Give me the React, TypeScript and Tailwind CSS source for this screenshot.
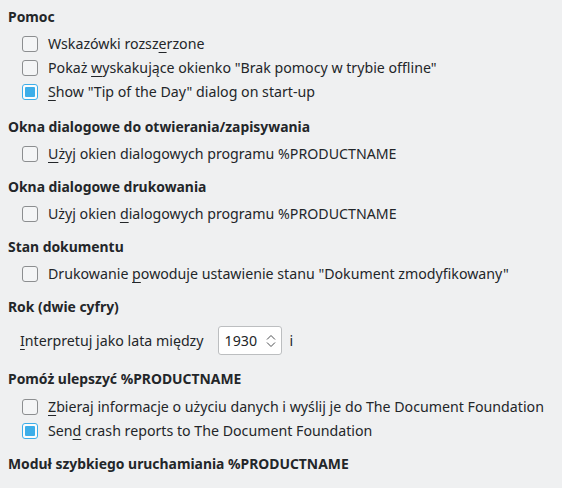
import React from "react";

const U = ({ children }: { children: React.ReactNode }) => (
  <span className="underline decoration-1 underline-offset-[3px]">{children}</span>
);

function Checkbox({ checked }: { checked?: boolean }) {
  if (checked) {
    return (
      <span className="flex h-4 w-4 shrink-0 items-center justify-center rounded-[3px] border border-[#3daee9] bg-[#fcfcfc]">
        <span className="h-[10px] w-[10px] rounded-[1px] bg-[#3daee9]" />
      </span>
    );
  }
  return <span className="h-4 w-4 shrink-0 rounded-[3px] border border-[#8c8e90] bg-[#f4f5f6]" />;
}

function Row({ checked, children }: { checked?: boolean; children: React.ReactNode }) {
  return (
    <div className="flex h-6 items-center gap-[10px] pl-[22px] whitespace-nowrap">
      <Checkbox checked={checked} />
      <span>{children}</span>
    </div>
  );
}

function Heading({ children, className = "" }: { children: React.ReactNode; className?: string }) {
  return (
    <div className={`h-5 leading-5 pl-2 text-[13.9px] font-bold whitespace-nowrap ${className}`}>{children}</div>
  );
}

export default function App() {
  return (
    <div
      className="h-[488px] w-[562px] overflow-hidden bg-[#eff0f1] pt-[7px] text-[14.2px] leading-5 text-[#232629]"
      style={{ fontFamily: '"Noto Sans", "DejaVu Sans", sans-serif' }}
    >
      <Heading>Pomoc</Heading>
      <div className="mt-[5px]">
        <Row>
          Wskazówki rozsz<U>e</U>rzone
        </Row>
        <Row>
          Pokaż <U>w</U>yskakujące okienko "Brak pomocy w trybie offline"
        </Row>
        <Row checked>
          <U>S</U>how "Tip of the Day" dialog on start-up
        </Row>
      </div>

      <Heading className="mt-[13px]">Okna dialogowe do otwierania/zapisywania</Heading>
      <div className="mt-[5px]">
        <Row>
          <U>U</U>żyj okien dialogowych programu %PRODUCTNAME
        </Row>
      </div>

      <Heading className="mt-[11px]">Okna dialogowe drukowania</Heading>
      <div className="mt-[5px]">
        <Row>
          Użyj okien <U>d</U>ialogowych programu %PRODUCTNAME
        </Row>
      </div>

      <Heading className="mt-[11px]">Stan dokumentu</Heading>
      <div className="mt-[5px]">
        <Row>
          Drukowanie <U>p</U>owoduje ustawienie stanu "Dokument zmodyfikowany"
        </Row>
      </div>

      <Heading className="mt-[11px]">Rok (dwie cyfry)</Heading>
      <div className="mt-[9px] flex h-[29px] items-center pl-5 whitespace-nowrap">
        <span>
          <U>I</U>nterpretuj jako lata między
        </span>
        <div className="ml-[14px] flex h-[29px] w-[64px] items-center rounded-[3px] border border-[#bcbec0] bg-white pl-[6px]">
          <span>1930</span>
          <svg className="ml-auto mr-[4px]" width="12" height="16" viewBox="0 0 12 16" fill="none">
            <path d="M2 6.5 L6 2.5 L10 6.5" stroke="#4d4f52" strokeWidth="1" />
            <path d="M2 9.5 L6 13.5 L10 9.5" stroke="#4d4f52" strokeWidth="1" />
          </svg>
        </div>
        <span className="ml-2">i</span>
      </div>

      <Heading className="mt-[14px]">Pomóż ulepszyć %PRODUCTNAME</Heading>
      <div className="mt-[6px]">
        <Row>
          <U>Z</U>bieraj informacje o użyciu danych i wyślij je do The Document Foundation
        </Row>
        <Row checked>
          Sen<U>d</U> crash reports to The Document Foundation
        </Row>
      </div>

      <Heading className="mt-[11px]">Moduł szybkiego uruchamiania %PRODUCTNAME</Heading>
    </div>
  );
}
